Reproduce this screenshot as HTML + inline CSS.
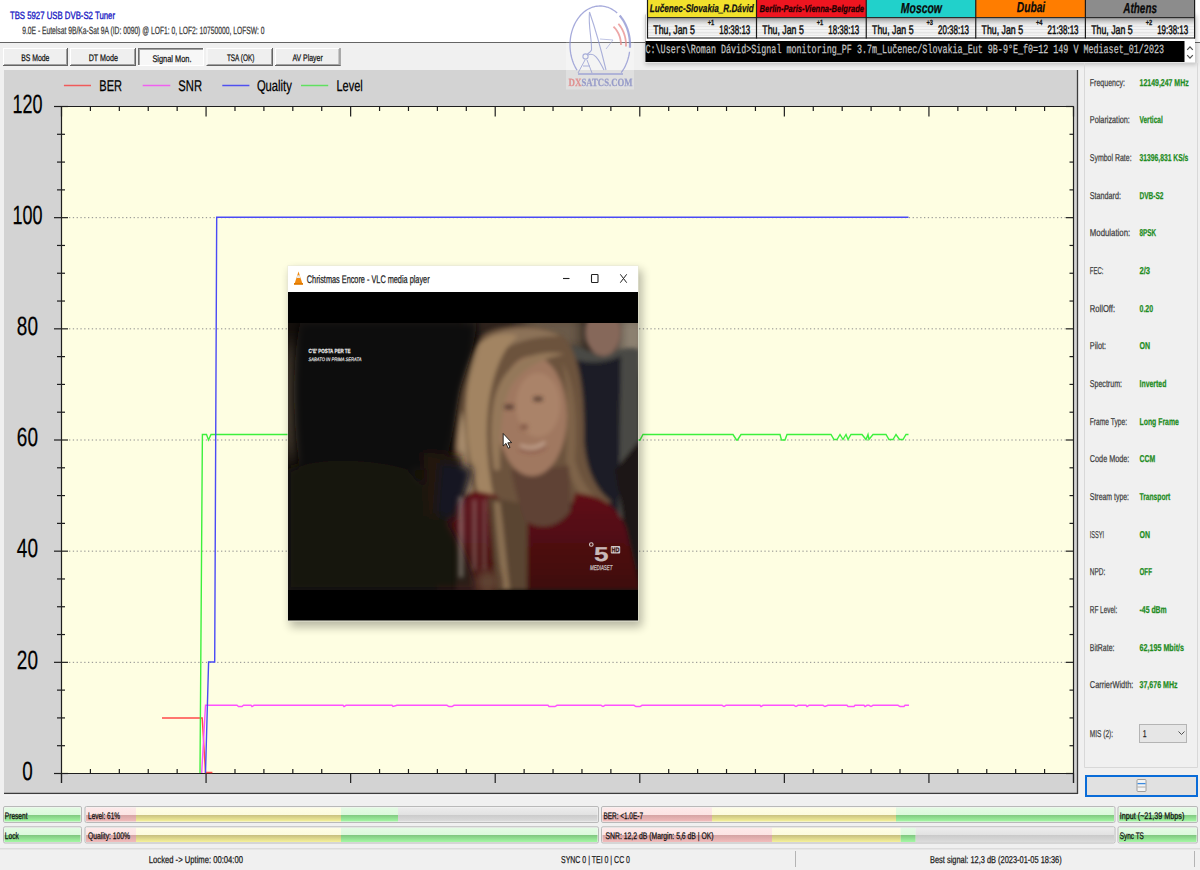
<!DOCTYPE html><html><head><meta charset="utf-8"><style>html,body{margin:0;padding:0;background:#f0f0f0;width:1200px;height:870px;overflow:hidden}svg{display:block}</style></head><body>
<svg width="1200" height="870" viewBox="0 0 1200 870" text-rendering="geometricPrecision">
<defs>
<linearGradient id="gGreen" x1="0" y1="0" x2="0" y2="1">
 <stop offset="0" stop-color="#e4fbe4"/><stop offset="0.52" stop-color="#dcf9dc"/><stop offset="0.53" stop-color="#80c880"/><stop offset="1" stop-color="#a4f8a4"/></linearGradient>
<linearGradient id="gPink" x1="0" y1="0" x2="0" y2="1">
 <stop offset="0" stop-color="#fdeaea"/><stop offset="0.52" stop-color="#fce4e4"/><stop offset="0.53" stop-color="#d4a4a4"/><stop offset="1" stop-color="#f2bcbc"/></linearGradient>
<linearGradient id="gYellow" x1="0" y1="0" x2="0" y2="1">
 <stop offset="0" stop-color="#fefde6"/><stop offset="0.52" stop-color="#fcfbde"/><stop offset="0.53" stop-color="#c8c080"/><stop offset="1" stop-color="#f6f29a"/></linearGradient>
<linearGradient id="gGray" x1="0" y1="0" x2="0" y2="1">
 <stop offset="0" stop-color="#ececec"/><stop offset="0.52" stop-color="#e2e2e2"/><stop offset="0.53" stop-color="#cacaca"/><stop offset="1" stop-color="#dcdcdc"/></linearGradient>
<linearGradient id="gTime" x1="0" y1="0" x2="0" y2="1">
 <stop offset="0" stop-color="#9a9a9a"/><stop offset="0.2" stop-color="#d0d0d0"/><stop offset="0.35" stop-color="#ececec"/><stop offset="0.6" stop-color="#f6f6f6"/><stop offset="0.8" stop-color="#ececec"/><stop offset="0.9" stop-color="#fafafa"/><stop offset="1" stop-color="#ffffff"/></linearGradient>
<filter id="shadow" x="-20%" y="-20%" width="140%" height="140%"><feGaussianBlur stdDeviation="5"/></filter>
<filter id="blur2" x="-30%" y="-30%" width="160%" height="160%"><feGaussianBlur stdDeviation="2"/></filter>
<filter id="blur4" x="-30%" y="-30%" width="160%" height="160%"><feGaussianBlur stdDeviation="4"/></filter>
<filter id="blur8" x="-30%" y="-30%" width="160%" height="160%"><feGaussianBlur stdDeviation="8"/></filter>
<linearGradient id="gDress" x1="0" y1="0" x2="0" y2="1"><stop offset="0" stop-color="#621218"/><stop offset="1" stop-color="#3e080c"/></linearGradient>
<clipPath id="vidclip"><rect x="288" y="323" width="350" height="267"/></clipPath>
</defs>
<rect x="0" y="0" width="1200" height="870" fill="#f0f0f0" />
<rect x="0" y="0" width="1200" height="42" fill="#ffffff" />
<line x1="0" y1="42.5" x2="1200" y2="42.5" stroke="#646464" stroke-width="1" />
<text x="9.90" y="18.70" font-family="'Liberation Sans', sans-serif" font-size="10.5" font-weight="normal" font-style="normal" fill="#2020c4" textLength="105.10" lengthAdjust="spacingAndGlyphs"  stroke="#2020c4" stroke-width="0.35">TBS 5927 USB DVB-S2 Tuner</text>
<text x="22.20" y="33.80" font-family="'Liberation Sans', sans-serif" font-size="10.5" font-weight="normal" font-style="normal" fill="#3c3c3c" textLength="242.30" lengthAdjust="spacingAndGlyphs"  stroke="#3c3c3c" stroke-width="0.25">9.0E - Eutelsat 9B/Ka-Sat 9A (ID: 0090) @ LOF1: 0, LOF2: 10750000, LOFSW: 0</text>
<rect x="3" y="48" width="65" height="18" fill="#efefef" />
<line x1="3.5" y1="48" x2="3.5" y2="66" stroke="#ffffff" stroke-width="1" />
<line x1="3" y1="48.5" x2="68" y2="48.5" stroke="#ffffff" stroke-width="1" />
<line x1="67.5" y1="48" x2="67.5" y2="66" stroke="#646464" stroke-width="1" />
<line x1="3" y1="65.5" x2="68" y2="65.5" stroke="#646464" stroke-width="1" />
<line x1="66.5" y1="49" x2="66.5" y2="65" stroke="#a0a0a0" stroke-width="1" />
<line x1="4" y1="64.5" x2="67" y2="64.5" stroke="#a0a0a0" stroke-width="1" />
<text x="21.20" y="60.80" font-family="'Liberation Sans', sans-serif" font-size="9.5" font-weight="normal" font-style="normal" fill="#111" textLength="28.20" lengthAdjust="spacingAndGlyphs"  stroke="#111" stroke-width="0.25">BS Mode</text>
<rect x="70" y="48" width="66" height="18" fill="#efefef" />
<line x1="70.5" y1="48" x2="70.5" y2="66" stroke="#ffffff" stroke-width="1" />
<line x1="70" y1="48.5" x2="136" y2="48.5" stroke="#ffffff" stroke-width="1" />
<line x1="135.5" y1="48" x2="135.5" y2="66" stroke="#646464" stroke-width="1" />
<line x1="70" y1="65.5" x2="136" y2="65.5" stroke="#646464" stroke-width="1" />
<line x1="134.5" y1="49" x2="134.5" y2="65" stroke="#a0a0a0" stroke-width="1" />
<line x1="71" y1="64.5" x2="135" y2="64.5" stroke="#a0a0a0" stroke-width="1" />
<text x="88.70" y="60.80" font-family="'Liberation Sans', sans-serif" font-size="9.5" font-weight="normal" font-style="normal" fill="#111" textLength="29.20" lengthAdjust="spacingAndGlyphs"  stroke="#111" stroke-width="0.25">DT Mode</text>
<rect x="138" y="48" width="66" height="18" fill="#f7f7f7" />
<line x1="138.5" y1="48" x2="138.5" y2="66" stroke="#6e6e6e" stroke-width="1" />
<line x1="138" y1="48.5" x2="204" y2="48.5" stroke="#6e6e6e" stroke-width="1" />
<line x1="139.5" y1="49" x2="139.5" y2="65" stroke="#a0a0a0" stroke-width="1" />
<line x1="139" y1="49.5" x2="203" y2="49.5" stroke="#a0a0a0" stroke-width="1" />
<line x1="203.5" y1="48" x2="203.5" y2="66" stroke="#ffffff" stroke-width="1" />
<line x1="138" y1="65.5" x2="204" y2="65.5" stroke="#ffffff" stroke-width="1" />
<text x="152.40" y="61.60" font-family="'Liberation Sans', sans-serif" font-size="9.5" font-weight="normal" font-style="normal" fill="#111" textLength="39.10" lengthAdjust="spacingAndGlyphs"  stroke="#111" stroke-width="0.25">Signal Mon.</text>
<rect x="206.5" y="48" width="66.5" height="18" fill="#efefef" />
<line x1="207.0" y1="48" x2="207.0" y2="66" stroke="#ffffff" stroke-width="1" />
<line x1="206.5" y1="48.5" x2="273" y2="48.5" stroke="#ffffff" stroke-width="1" />
<line x1="272.5" y1="48" x2="272.5" y2="66" stroke="#646464" stroke-width="1" />
<line x1="206.5" y1="65.5" x2="273" y2="65.5" stroke="#646464" stroke-width="1" />
<line x1="271.5" y1="49" x2="271.5" y2="65" stroke="#a0a0a0" stroke-width="1" />
<line x1="207.5" y1="64.5" x2="272" y2="64.5" stroke="#a0a0a0" stroke-width="1" />
<text x="226.90" y="60.80" font-family="'Liberation Sans', sans-serif" font-size="9.5" font-weight="normal" font-style="normal" fill="#111" textLength="27.50" lengthAdjust="spacingAndGlyphs"  stroke="#111" stroke-width="0.25">TSA (OK)</text>
<rect x="275" y="48" width="65.5" height="18" fill="#efefef" />
<line x1="275.5" y1="48" x2="275.5" y2="66" stroke="#ffffff" stroke-width="1" />
<line x1="275" y1="48.5" x2="340.5" y2="48.5" stroke="#ffffff" stroke-width="1" />
<line x1="340.0" y1="48" x2="340.0" y2="66" stroke="#646464" stroke-width="1" />
<line x1="275" y1="65.5" x2="340.5" y2="65.5" stroke="#646464" stroke-width="1" />
<line x1="339.0" y1="49" x2="339.0" y2="65" stroke="#a0a0a0" stroke-width="1" />
<line x1="276" y1="64.5" x2="339.5" y2="64.5" stroke="#a0a0a0" stroke-width="1" />
<text x="292.40" y="60.80" font-family="'Liberation Sans', sans-serif" font-size="9.5" font-weight="normal" font-style="normal" fill="#111" textLength="30.30" lengthAdjust="spacingAndGlyphs"  stroke="#111" stroke-width="0.25">AV Player</text>
<rect x="4" y="70" width="1074" height="723.5" fill="#d3d3d3" />
<line x1="1077.5" y1="70" x2="1077.5" y2="794" stroke="#3c3c3c" stroke-width="1.3" />
<line x1="4" y1="793.5" x2="1078" y2="793.5" stroke="#3c3c3c" stroke-width="1.3" />
<line x1="4" y1="794.8" x2="1079" y2="794.8" stroke="#ffffff" stroke-width="1" />
<rect x="61.5" y="106.5" width="1012.0" height="667.0" fill="#fefee2" />
<line x1="69" y1="662.3333333333334" x2="1066" y2="662.3333333333334" stroke="#8c8c8c" stroke-width="1" stroke-dasharray="1.3 2.5"/>
<line x1="69" y1="551.1666666666666" x2="1066" y2="551.1666666666666" stroke="#8c8c8c" stroke-width="1" stroke-dasharray="1.3 2.5"/>
<line x1="69" y1="440.0" x2="1066" y2="440.0" stroke="#8c8c8c" stroke-width="1" stroke-dasharray="1.3 2.5"/>
<line x1="69" y1="328.8333333333333" x2="1066" y2="328.8333333333333" stroke="#8c8c8c" stroke-width="1" stroke-dasharray="1.3 2.5"/>
<line x1="69" y1="217.66666666666663" x2="1066" y2="217.66666666666663" stroke="#8c8c8c" stroke-width="1" stroke-dasharray="1.3 2.5"/>
<line x1="61.5" y1="106.5" x2="61.5" y2="783" stroke="#1e1e1e" stroke-width="1.2" />
<line x1="1073.5" y1="106.5" x2="1073.5" y2="783" stroke="#1e1e1e" stroke-width="1.2" />
<line x1="54" y1="106.5" x2="1073.5" y2="106.5" stroke="#1e1e1e" stroke-width="1.2" />
<line x1="54" y1="773.5" x2="1073.5" y2="773.5" stroke="#1e1e1e" stroke-width="1.2" />
<line x1="61.5" y1="773.5" x2="61.5" y2="783" stroke="#1e1e1e" stroke-width="1.2" />
<line x1="61.5" y1="106.5" x2="61.5" y2="116.5" stroke="#1e1e1e" stroke-width="1.2" />
<line x1="90.41428571428571" y1="769.0" x2="90.41428571428571" y2="773.5" stroke="#1e1e1e" stroke-width="1.2" />
<line x1="90.41428571428571" y1="106.5" x2="90.41428571428571" y2="111.0" stroke="#1e1e1e" stroke-width="1.2" />
<line x1="119.32857142857142" y1="769.0" x2="119.32857142857142" y2="773.5" stroke="#1e1e1e" stroke-width="1.2" />
<line x1="119.32857142857142" y1="106.5" x2="119.32857142857142" y2="111.0" stroke="#1e1e1e" stroke-width="1.2" />
<line x1="148.24285714285713" y1="769.0" x2="148.24285714285713" y2="773.5" stroke="#1e1e1e" stroke-width="1.2" />
<line x1="148.24285714285713" y1="106.5" x2="148.24285714285713" y2="111.0" stroke="#1e1e1e" stroke-width="1.2" />
<line x1="177.15714285714284" y1="769.0" x2="177.15714285714284" y2="773.5" stroke="#1e1e1e" stroke-width="1.2" />
<line x1="177.15714285714284" y1="106.5" x2="177.15714285714284" y2="111.0" stroke="#1e1e1e" stroke-width="1.2" />
<line x1="206.07142857142858" y1="773.5" x2="206.07142857142858" y2="783" stroke="#1e1e1e" stroke-width="1.2" />
<line x1="206.07142857142858" y1="106.5" x2="206.07142857142858" y2="116.5" stroke="#1e1e1e" stroke-width="1.2" />
<line x1="234.9857142857143" y1="769.0" x2="234.9857142857143" y2="773.5" stroke="#1e1e1e" stroke-width="1.2" />
<line x1="234.9857142857143" y1="106.5" x2="234.9857142857143" y2="111.0" stroke="#1e1e1e" stroke-width="1.2" />
<line x1="263.9" y1="769.0" x2="263.9" y2="773.5" stroke="#1e1e1e" stroke-width="1.2" />
<line x1="263.9" y1="106.5" x2="263.9" y2="111.0" stroke="#1e1e1e" stroke-width="1.2" />
<line x1="292.8142857142857" y1="769.0" x2="292.8142857142857" y2="773.5" stroke="#1e1e1e" stroke-width="1.2" />
<line x1="292.8142857142857" y1="106.5" x2="292.8142857142857" y2="111.0" stroke="#1e1e1e" stroke-width="1.2" />
<line x1="321.72857142857146" y1="769.0" x2="321.72857142857146" y2="773.5" stroke="#1e1e1e" stroke-width="1.2" />
<line x1="321.72857142857146" y1="106.5" x2="321.72857142857146" y2="111.0" stroke="#1e1e1e" stroke-width="1.2" />
<line x1="350.64285714285717" y1="773.5" x2="350.64285714285717" y2="783" stroke="#1e1e1e" stroke-width="1.2" />
<line x1="350.64285714285717" y1="106.5" x2="350.64285714285717" y2="116.5" stroke="#1e1e1e" stroke-width="1.2" />
<line x1="379.5571428571429" y1="769.0" x2="379.5571428571429" y2="773.5" stroke="#1e1e1e" stroke-width="1.2" />
<line x1="379.5571428571429" y1="106.5" x2="379.5571428571429" y2="111.0" stroke="#1e1e1e" stroke-width="1.2" />
<line x1="408.4714285714286" y1="769.0" x2="408.4714285714286" y2="773.5" stroke="#1e1e1e" stroke-width="1.2" />
<line x1="408.4714285714286" y1="106.5" x2="408.4714285714286" y2="111.0" stroke="#1e1e1e" stroke-width="1.2" />
<line x1="437.3857142857143" y1="769.0" x2="437.3857142857143" y2="773.5" stroke="#1e1e1e" stroke-width="1.2" />
<line x1="437.3857142857143" y1="106.5" x2="437.3857142857143" y2="111.0" stroke="#1e1e1e" stroke-width="1.2" />
<line x1="466.3" y1="769.0" x2="466.3" y2="773.5" stroke="#1e1e1e" stroke-width="1.2" />
<line x1="466.3" y1="106.5" x2="466.3" y2="111.0" stroke="#1e1e1e" stroke-width="1.2" />
<line x1="495.2142857142857" y1="773.5" x2="495.2142857142857" y2="783" stroke="#1e1e1e" stroke-width="1.2" />
<line x1="495.2142857142857" y1="106.5" x2="495.2142857142857" y2="116.5" stroke="#1e1e1e" stroke-width="1.2" />
<line x1="524.1285714285714" y1="769.0" x2="524.1285714285714" y2="773.5" stroke="#1e1e1e" stroke-width="1.2" />
<line x1="524.1285714285714" y1="106.5" x2="524.1285714285714" y2="111.0" stroke="#1e1e1e" stroke-width="1.2" />
<line x1="553.0428571428572" y1="769.0" x2="553.0428571428572" y2="773.5" stroke="#1e1e1e" stroke-width="1.2" />
<line x1="553.0428571428572" y1="106.5" x2="553.0428571428572" y2="111.0" stroke="#1e1e1e" stroke-width="1.2" />
<line x1="581.9571428571429" y1="769.0" x2="581.9571428571429" y2="773.5" stroke="#1e1e1e" stroke-width="1.2" />
<line x1="581.9571428571429" y1="106.5" x2="581.9571428571429" y2="111.0" stroke="#1e1e1e" stroke-width="1.2" />
<line x1="610.8714285714286" y1="769.0" x2="610.8714285714286" y2="773.5" stroke="#1e1e1e" stroke-width="1.2" />
<line x1="610.8714285714286" y1="106.5" x2="610.8714285714286" y2="111.0" stroke="#1e1e1e" stroke-width="1.2" />
<line x1="639.7857142857143" y1="773.5" x2="639.7857142857143" y2="783" stroke="#1e1e1e" stroke-width="1.2" />
<line x1="639.7857142857143" y1="106.5" x2="639.7857142857143" y2="116.5" stroke="#1e1e1e" stroke-width="1.2" />
<line x1="668.7" y1="769.0" x2="668.7" y2="773.5" stroke="#1e1e1e" stroke-width="1.2" />
<line x1="668.7" y1="106.5" x2="668.7" y2="111.0" stroke="#1e1e1e" stroke-width="1.2" />
<line x1="697.6142857142858" y1="769.0" x2="697.6142857142858" y2="773.5" stroke="#1e1e1e" stroke-width="1.2" />
<line x1="697.6142857142858" y1="106.5" x2="697.6142857142858" y2="111.0" stroke="#1e1e1e" stroke-width="1.2" />
<line x1="726.5285714285715" y1="769.0" x2="726.5285714285715" y2="773.5" stroke="#1e1e1e" stroke-width="1.2" />
<line x1="726.5285714285715" y1="106.5" x2="726.5285714285715" y2="111.0" stroke="#1e1e1e" stroke-width="1.2" />
<line x1="755.4428571428572" y1="769.0" x2="755.4428571428572" y2="773.5" stroke="#1e1e1e" stroke-width="1.2" />
<line x1="755.4428571428572" y1="106.5" x2="755.4428571428572" y2="111.0" stroke="#1e1e1e" stroke-width="1.2" />
<line x1="784.3571428571429" y1="773.5" x2="784.3571428571429" y2="783" stroke="#1e1e1e" stroke-width="1.2" />
<line x1="784.3571428571429" y1="106.5" x2="784.3571428571429" y2="116.5" stroke="#1e1e1e" stroke-width="1.2" />
<line x1="813.2714285714286" y1="769.0" x2="813.2714285714286" y2="773.5" stroke="#1e1e1e" stroke-width="1.2" />
<line x1="813.2714285714286" y1="106.5" x2="813.2714285714286" y2="111.0" stroke="#1e1e1e" stroke-width="1.2" />
<line x1="842.1857142857143" y1="769.0" x2="842.1857142857143" y2="773.5" stroke="#1e1e1e" stroke-width="1.2" />
<line x1="842.1857142857143" y1="106.5" x2="842.1857142857143" y2="111.0" stroke="#1e1e1e" stroke-width="1.2" />
<line x1="871.1" y1="769.0" x2="871.1" y2="773.5" stroke="#1e1e1e" stroke-width="1.2" />
<line x1="871.1" y1="106.5" x2="871.1" y2="111.0" stroke="#1e1e1e" stroke-width="1.2" />
<line x1="900.0142857142857" y1="769.0" x2="900.0142857142857" y2="773.5" stroke="#1e1e1e" stroke-width="1.2" />
<line x1="900.0142857142857" y1="106.5" x2="900.0142857142857" y2="111.0" stroke="#1e1e1e" stroke-width="1.2" />
<line x1="928.9285714285714" y1="773.5" x2="928.9285714285714" y2="783" stroke="#1e1e1e" stroke-width="1.2" />
<line x1="928.9285714285714" y1="106.5" x2="928.9285714285714" y2="116.5" stroke="#1e1e1e" stroke-width="1.2" />
<line x1="957.8428571428572" y1="769.0" x2="957.8428571428572" y2="773.5" stroke="#1e1e1e" stroke-width="1.2" />
<line x1="957.8428571428572" y1="106.5" x2="957.8428571428572" y2="111.0" stroke="#1e1e1e" stroke-width="1.2" />
<line x1="986.7571428571429" y1="769.0" x2="986.7571428571429" y2="773.5" stroke="#1e1e1e" stroke-width="1.2" />
<line x1="986.7571428571429" y1="106.5" x2="986.7571428571429" y2="111.0" stroke="#1e1e1e" stroke-width="1.2" />
<line x1="1015.6714285714286" y1="769.0" x2="1015.6714285714286" y2="773.5" stroke="#1e1e1e" stroke-width="1.2" />
<line x1="1015.6714285714286" y1="106.5" x2="1015.6714285714286" y2="111.0" stroke="#1e1e1e" stroke-width="1.2" />
<line x1="1044.5857142857144" y1="769.0" x2="1044.5857142857144" y2="773.5" stroke="#1e1e1e" stroke-width="1.2" />
<line x1="1044.5857142857144" y1="106.5" x2="1044.5857142857144" y2="111.0" stroke="#1e1e1e" stroke-width="1.2" />
<line x1="1073.5" y1="773.5" x2="1073.5" y2="783" stroke="#1e1e1e" stroke-width="1.2" />
<line x1="1073.5" y1="106.5" x2="1073.5" y2="116.5" stroke="#1e1e1e" stroke-width="1.2" />
<line x1="54" y1="773.5" x2="68" y2="773.5" stroke="#1e1e1e" stroke-width="1.2" />
<line x1="1066" y1="773.5" x2="1073.5" y2="773.5" stroke="#1e1e1e" stroke-width="1.2" />
<line x1="57" y1="745.7083333333334" x2="65" y2="745.7083333333334" stroke="#1e1e1e" stroke-width="1.2" />
<line x1="1069.5" y1="745.7083333333334" x2="1073.5" y2="745.7083333333334" stroke="#1e1e1e" stroke-width="1.2" />
<line x1="57" y1="717.9166666666666" x2="65" y2="717.9166666666666" stroke="#1e1e1e" stroke-width="1.2" />
<line x1="1069.5" y1="717.9166666666666" x2="1073.5" y2="717.9166666666666" stroke="#1e1e1e" stroke-width="1.2" />
<line x1="57" y1="690.125" x2="65" y2="690.125" stroke="#1e1e1e" stroke-width="1.2" />
<line x1="1069.5" y1="690.125" x2="1073.5" y2="690.125" stroke="#1e1e1e" stroke-width="1.2" />
<line x1="54" y1="662.3333333333334" x2="68" y2="662.3333333333334" stroke="#1e1e1e" stroke-width="1.2" />
<line x1="1066" y1="662.3333333333334" x2="1073.5" y2="662.3333333333334" stroke="#1e1e1e" stroke-width="1.2" />
<line x1="57" y1="634.5416666666666" x2="65" y2="634.5416666666666" stroke="#1e1e1e" stroke-width="1.2" />
<line x1="1069.5" y1="634.5416666666666" x2="1073.5" y2="634.5416666666666" stroke="#1e1e1e" stroke-width="1.2" />
<line x1="57" y1="606.75" x2="65" y2="606.75" stroke="#1e1e1e" stroke-width="1.2" />
<line x1="1069.5" y1="606.75" x2="1073.5" y2="606.75" stroke="#1e1e1e" stroke-width="1.2" />
<line x1="57" y1="578.9583333333334" x2="65" y2="578.9583333333334" stroke="#1e1e1e" stroke-width="1.2" />
<line x1="1069.5" y1="578.9583333333334" x2="1073.5" y2="578.9583333333334" stroke="#1e1e1e" stroke-width="1.2" />
<line x1="54" y1="551.1666666666666" x2="68" y2="551.1666666666666" stroke="#1e1e1e" stroke-width="1.2" />
<line x1="1066" y1="551.1666666666666" x2="1073.5" y2="551.1666666666666" stroke="#1e1e1e" stroke-width="1.2" />
<line x1="57" y1="523.375" x2="65" y2="523.375" stroke="#1e1e1e" stroke-width="1.2" />
<line x1="1069.5" y1="523.375" x2="1073.5" y2="523.375" stroke="#1e1e1e" stroke-width="1.2" />
<line x1="57" y1="495.5833333333333" x2="65" y2="495.5833333333333" stroke="#1e1e1e" stroke-width="1.2" />
<line x1="1069.5" y1="495.5833333333333" x2="1073.5" y2="495.5833333333333" stroke="#1e1e1e" stroke-width="1.2" />
<line x1="57" y1="467.7916666666667" x2="65" y2="467.7916666666667" stroke="#1e1e1e" stroke-width="1.2" />
<line x1="1069.5" y1="467.7916666666667" x2="1073.5" y2="467.7916666666667" stroke="#1e1e1e" stroke-width="1.2" />
<line x1="54" y1="440.0" x2="68" y2="440.0" stroke="#1e1e1e" stroke-width="1.2" />
<line x1="1066" y1="440.0" x2="1073.5" y2="440.0" stroke="#1e1e1e" stroke-width="1.2" />
<line x1="57" y1="412.2083333333333" x2="65" y2="412.2083333333333" stroke="#1e1e1e" stroke-width="1.2" />
<line x1="1069.5" y1="412.2083333333333" x2="1073.5" y2="412.2083333333333" stroke="#1e1e1e" stroke-width="1.2" />
<line x1="57" y1="384.4166666666667" x2="65" y2="384.4166666666667" stroke="#1e1e1e" stroke-width="1.2" />
<line x1="1069.5" y1="384.4166666666667" x2="1073.5" y2="384.4166666666667" stroke="#1e1e1e" stroke-width="1.2" />
<line x1="57" y1="356.625" x2="65" y2="356.625" stroke="#1e1e1e" stroke-width="1.2" />
<line x1="1069.5" y1="356.625" x2="1073.5" y2="356.625" stroke="#1e1e1e" stroke-width="1.2" />
<line x1="54" y1="328.8333333333333" x2="68" y2="328.8333333333333" stroke="#1e1e1e" stroke-width="1.2" />
<line x1="1066" y1="328.8333333333333" x2="1073.5" y2="328.8333333333333" stroke="#1e1e1e" stroke-width="1.2" />
<line x1="57" y1="301.0416666666667" x2="65" y2="301.0416666666667" stroke="#1e1e1e" stroke-width="1.2" />
<line x1="1069.5" y1="301.0416666666667" x2="1073.5" y2="301.0416666666667" stroke="#1e1e1e" stroke-width="1.2" />
<line x1="57" y1="273.25" x2="65" y2="273.25" stroke="#1e1e1e" stroke-width="1.2" />
<line x1="1069.5" y1="273.25" x2="1073.5" y2="273.25" stroke="#1e1e1e" stroke-width="1.2" />
<line x1="57" y1="245.45833333333337" x2="65" y2="245.45833333333337" stroke="#1e1e1e" stroke-width="1.2" />
<line x1="1069.5" y1="245.45833333333337" x2="1073.5" y2="245.45833333333337" stroke="#1e1e1e" stroke-width="1.2" />
<line x1="54" y1="217.66666666666663" x2="68" y2="217.66666666666663" stroke="#1e1e1e" stroke-width="1.2" />
<line x1="1066" y1="217.66666666666663" x2="1073.5" y2="217.66666666666663" stroke="#1e1e1e" stroke-width="1.2" />
<line x1="57" y1="189.875" x2="65" y2="189.875" stroke="#1e1e1e" stroke-width="1.2" />
<line x1="1069.5" y1="189.875" x2="1073.5" y2="189.875" stroke="#1e1e1e" stroke-width="1.2" />
<line x1="57" y1="162.08333333333337" x2="65" y2="162.08333333333337" stroke="#1e1e1e" stroke-width="1.2" />
<line x1="1069.5" y1="162.08333333333337" x2="1073.5" y2="162.08333333333337" stroke="#1e1e1e" stroke-width="1.2" />
<line x1="57" y1="134.29166666666663" x2="65" y2="134.29166666666663" stroke="#1e1e1e" stroke-width="1.2" />
<line x1="1069.5" y1="134.29166666666663" x2="1073.5" y2="134.29166666666663" stroke="#1e1e1e" stroke-width="1.2" />
<line x1="54" y1="106.5" x2="68" y2="106.5" stroke="#1e1e1e" stroke-width="1.2" />
<line x1="1066" y1="106.5" x2="1073.5" y2="106.5" stroke="#1e1e1e" stroke-width="1.2" />
<text x="12.40" y="112.80" font-family="'Liberation Sans', sans-serif" font-size="26.3" font-weight="normal" font-style="normal" fill="#000" textLength="30.00" lengthAdjust="spacingAndGlyphs"  stroke="#000" stroke-width="0.25">120</text>
<text x="12.40" y="223.97" font-family="'Liberation Sans', sans-serif" font-size="26.3" font-weight="normal" font-style="normal" fill="#000" textLength="30.00" lengthAdjust="spacingAndGlyphs"  stroke="#000" stroke-width="0.25">100</text>
<text x="16.85" y="335.13" font-family="'Liberation Sans', sans-serif" font-size="26.3" font-weight="normal" font-style="normal" fill="#000" textLength="21.10" lengthAdjust="spacingAndGlyphs"  stroke="#000" stroke-width="0.25">80</text>
<text x="16.85" y="446.30" font-family="'Liberation Sans', sans-serif" font-size="26.3" font-weight="normal" font-style="normal" fill="#000" textLength="21.10" lengthAdjust="spacingAndGlyphs"  stroke="#000" stroke-width="0.25">60</text>
<text x="16.85" y="557.47" font-family="'Liberation Sans', sans-serif" font-size="26.3" font-weight="normal" font-style="normal" fill="#000" textLength="21.10" lengthAdjust="spacingAndGlyphs"  stroke="#000" stroke-width="0.25">40</text>
<text x="16.85" y="668.63" font-family="'Liberation Sans', sans-serif" font-size="26.3" font-weight="normal" font-style="normal" fill="#000" textLength="21.10" lengthAdjust="spacingAndGlyphs"  stroke="#000" stroke-width="0.25">20</text>
<text x="22.15" y="779.80" font-family="'Liberation Sans', sans-serif" font-size="26.3" font-weight="normal" font-style="normal" fill="#000" textLength="10.50" lengthAdjust="spacingAndGlyphs"  stroke="#000" stroke-width="0.25">0</text>
<line x1="63.9" y1="85.5" x2="91" y2="85.5" stroke="#f05a5a" stroke-width="1.5" />
<text x="99.30" y="91.40" font-family="'Liberation Sans', sans-serif" font-size="15.5" font-weight="normal" font-style="normal" fill="#000" textLength="22.70" lengthAdjust="spacingAndGlyphs"  stroke="#000" stroke-width="0.25">BER</text>
<line x1="142.7" y1="85.5" x2="170.3" y2="85.5" stroke="#f060f0" stroke-width="1.5" />
<text x="178.30" y="91.40" font-family="'Liberation Sans', sans-serif" font-size="15.5" font-weight="normal" font-style="normal" fill="#000" textLength="23.70" lengthAdjust="spacingAndGlyphs"  stroke="#000" stroke-width="0.25">SNR</text>
<line x1="222.3" y1="85.5" x2="249.4" y2="85.5" stroke="#5050f0" stroke-width="1.5" />
<text x="256.90" y="91.40" font-family="'Liberation Sans', sans-serif" font-size="15.5" font-weight="normal" font-style="normal" fill="#000" textLength="34.90" lengthAdjust="spacingAndGlyphs"  stroke="#000" stroke-width="0.25">Quality</text>
<line x1="301" y1="85.5" x2="328.2" y2="85.5" stroke="#60e060" stroke-width="1.5" />
<text x="336.50" y="91.40" font-family="'Liberation Sans', sans-serif" font-size="15.5" font-weight="normal" font-style="normal" fill="#000" textLength="26.30" lengthAdjust="spacingAndGlyphs"  stroke="#000" stroke-width="0.25">Level</text>
<polyline points="162.0,718.0 202.2,718.0 205.5,772.5 212.4,772.5" fill="none" stroke="#ff4a4a" stroke-width="1.4"/>
<polyline points="200.0,773.0 202.4,434.5 206.5,434.5 208.5,440.0 211.0,434.5 628.0,434.5 632.0,440.0 640.0,440.0 643.0,434.5 733.0,434.5 736.5,440.0 737.5,440.0 741.0,434.5 780.0,434.5 781.5,440.0 785.0,440.0 787.0,434.5 831.0,434.5 834.0,439.5 837.0,439.5 840.0,434.5 843.0,439.5 846.0,434.5 848.0,439.5 851.0,434.5 862.0,434.5 866.0,439.5 868.0,434.5 869.0,439.5 873.0,434.5 886.0,434.5 889.0,439.5 893.0,439.5 896.0,434.5 899.5,439.5 903.0,439.5 906.0,434.5 908.5,434.5" fill="none" stroke="#3cf03c" stroke-width="1.4"/>
<polyline points="201.7,773.0 205.5,705.3 237.0,705.3 238.5,706.5 242.0,706.5 243.5,705.3 251.0,705.3 252.0,706.5 254.0,705.3 343.0,705.3 344.0,706.5 346.0,705.3 392.0,705.3 393.0,706.5 397.0,705.3 447.0,705.3 449.0,706.5 452.0,706.5 454.0,705.3 548.0,705.3 549.0,706.5 555.0,706.5 557.0,705.3 601.0,705.3 603.0,706.5 605.0,705.3 634.0,705.3 636.0,706.5 640.0,706.5 642.0,705.3 722.0,705.3 724.0,706.5 726.0,705.3 760.0,705.3 761.0,706.5 763.0,705.3 794.0,705.3 796.0,706.5 798.0,705.3 806.0,705.3 807.0,706.5 809.0,705.3 823.0,705.3 825.0,706.5 828.0,705.3 847.0,705.3 848.0,706.5 854.0,706.5 855.0,705.3 864.0,705.3 865.0,706.5 867.0,705.3 869.0,705.3 871.0,706.5 873.0,705.3 898.0,705.3 900.0,706.5 904.0,706.5 905.0,705.3 909.0,705.3" fill="none" stroke="#ff50ff" stroke-width="1.4"/>
<polyline points="205.5,773.0 208.6,662.0 214.7,662.0 216.7,217.2 908.5,217.2" fill="none" stroke="#4a4af5" stroke-width="1.4"/>
<rect x="290" y="270" width="352" height="357" fill="#000" opacity="0.28" filter="url(#shadow)"/>
<rect x="287.5" y="265.5" width="351" height="356" fill="#e8e8d8" />
<rect x="288" y="266" width="350" height="26" fill="#ffffff" />
<rect x="288" y="292" width="350" height="328.5" fill="#000000" />
<path d="M298.5,271.5 L302.2,283 L294.8,283 Z" fill="#f08a10"/>
<path d="M297.4,275.2 L299.6,275.2 L300.4,278 L296.6,278 Z" fill="#e8e8e8"/>
<rect x="294" y="283" width="9" height="1.8" fill="#e07a00" />
<text x="306.80" y="283.10" font-family="'Liberation Sans', sans-serif" font-size="11" font-weight="normal" font-style="normal" fill="#1a1a1a" textLength="122.80" lengthAdjust="spacingAndGlyphs"  stroke="#1a1a1a" stroke-width="0.25">Christmas Encore - VLC media player</text>
<line x1="563" y1="278.5" x2="569.5" y2="278.5" stroke="#222" stroke-width="1.1" />
<rect x="591.5" y="274.5" width="6.5" height="8" fill="none" stroke="#222" stroke-width="1.1" rx="0.8"/>
<line x1="620.3" y1="274.3" x2="626.7" y2="282.7" stroke="#222" stroke-width="1.0" />
<line x1="626.7" y1="274.3" x2="620.3" y2="282.7" stroke="#222" stroke-width="1.0" />
<g clip-path="url(#vidclip)">
<rect x="288" y="323" width="350" height="267" fill="#130e0b" />
<g filter="url(#blur8)">
<ellipse cx="292" cy="400" rx="10" ry="60" fill="#4e4236"/>
<rect x="525" y="312" width="60" height="42" fill="#6a5a48"/>
<rect x="615" y="312" width="35" height="60" fill="#8e8272"/>
<rect x="470" y="312" width="55" height="30" fill="#2e241a"/>
<rect x="600" y="440" width="45" height="120" fill="#241a12"/>
</g>
<g filter="url(#blur2)">
<path d="M556,352 C570,340 585,348 600,356 C615,350 630,345 640,350 L640,470 L625,520 L600,510 L585,500 C575,470 560,400 556,352 Z" fill="#4a4844"/>
<path d="M571,358 C585,364 605,364 621,356 L618,540 C605,545 590,540 585,520 C578,470 573,410 571,358 Z" fill="#1a1c26"/>
<ellipse cx="603" cy="332" rx="18" ry="24" fill="#86685a"/>
<path d="M615,470 L640,440 L640,590 L630,560 Z" fill="#1e1712"/>
<path d="M482,335 C500,322 545,322 565,338 C580,355 585,395 584,440 C586,470 596,490 612,502 L590,510 L560,500 L530,520 L525,590 L478,590 C470,560 460,520 455,480 C450,440 455,390 468,360 C472,350 476,342 482,335 Z" fill="#6c533c"/>
<path d="M486,338 C505,326 540,325 560,336 C540,336 515,340 500,352 Z" fill="#8c7258"/>
<path d="M478,345 C488,335 505,332 518,336 C502,348 492,375 488,410 C485,440 488,470 494,500 L482,505 C472,475 465,440 466,405 C467,380 470,360 478,345 Z" fill="#a28462"/>
<path d="M462,410 C468,440 466,470 478,510 L470,515 C458,480 454,440 462,410 Z" fill="#a68a6a"/>
<path d="M562,362 C575,380 578,420 575,460 C580,480 590,495 605,505 L592,508 C578,495 570,480 566,460 C568,420 568,385 562,362 Z" fill="#7e644a"/>
<path d="M437,590 L438,540 C442,515 452,497 475,491 L495,495 L525,520 C540,530 558,528 570,512 L575,493 C595,495 615,500 626,528 L640,590 Z" fill="url(#gDress)"/>
<path d="M488,497 L528,505 L527,590 L496,590 C493,560 490,520 488,497 Z" fill="#5a4430"/>
<path d="M500,502 C504,530 506,560 510,590 L503,590 C499,560 496,530 494,502 Z" fill="#8a7052"/>
<path d="M511,470 L569,466 C570,490 572,505 570,512 C555,530 538,530 524,520 C518,500 514,485 511,470 Z" fill="#5e4234"/>
<ellipse cx="532" cy="416" rx="35" ry="60" fill="#a07860"/>
<ellipse cx="538" cy="405" rx="22" ry="32" fill="#b08a70" opacity="0.6"/>
<path d="M494,400 C502,365 530,348 565,354 C545,358 525,366 512,385 C503,400 500,430 500,470 L494,470 C490,445 490,420 494,400 Z" fill="#94785a"/>
</g>
<g filter="url(#blur4)">
<path d="M300,323 L477,323 C474,350 466,370 460,390 C455,420 452,440 448,452 L420,470 L300,470 C292,420 292,360 300,323 Z" fill="#0e0a08"/>
<path d="M288,470 C320,455 380,460 410,470 L435,500 C455,530 470,560 478,590 L288,590 Z" fill="#161210"/>
<path d="M423,452 L462,456 L458,520 L426,516 Z" fill="#24160f"/>
<path d="M440,462 L472,468 C470,485 462,505 450,520 L436,512 Z" fill="#141620"/>
</g>
<g filter="url(#blur2)" opacity="0.5"><rect x="456" y="496" width="33" height="96" fill="#6a3a3a" opacity="0.5"/><rect x="459" y="497" width="4" height="80" fill="#c0b0a8"/><rect x="473" y="500" width="3" height="70" fill="#a89890"/><rect x="483" y="500" width="3" height="70" fill="#908078"/></g>
<ellipse cx="488" cy="582" rx="12" ry="12" fill="#5e4232" filter="url(#blur4)"/>
<g filter="url(#blur2)" opacity="0.75"><ellipse cx="509" cy="407" rx="5" ry="2.2" fill="#3a2820"/><ellipse cx="538" cy="399" rx="5" ry="2.2" fill="#3a2820"/><ellipse cx="524" cy="427" rx="4" ry="3" fill="#7a5040"/><path d="M520,445 C528,449 538,448 545,442" stroke="#d8c0b0" stroke-width="2.4" fill="none"/><path d="M519,449 C528,454 540,453 546,446" stroke="#7a3a38" stroke-width="1.5" fill="none"/></g>
</g>
<text x="308.60" y="352.90" font-family="'Liberation Sans', sans-serif" font-size="6" font-weight="bold" font-style="normal" fill="#e8e8e8" textLength="42.00" lengthAdjust="spacingAndGlyphs"  stroke="#e8e8e8" stroke-width="0.25">C&#x27;E&#x27; POSTA PER TE</text>
<text x="308.60" y="360.50" font-family="'Liberation Sans', sans-serif" font-size="5" font-weight="normal" font-style="italic" fill="#d8d8d8" textLength="52.80" lengthAdjust="spacingAndGlyphs"  stroke="#d8d8d8" stroke-width="0.25">SABATO IN PRIMA SERATA</text>
<text x="594.00" y="561.00" font-family="'Liberation Sans', sans-serif" font-size="20" font-weight="bold" font-style="normal" fill="#c8b8b8" textLength="14.50" lengthAdjust="spacingAndGlyphs"  stroke="#c8b8b8" stroke-width="0.25">5</text>
<circle cx="591.3" cy="544.5" r="1.8" fill="none" stroke="#d0c8c8" stroke-width="1.1"/>
<rect x="610.8" y="546" width="9.4" height="7.5" rx="1" fill="#d0c8c8"/>
<text x="611.60" y="552.40" font-family="'Liberation Sans', sans-serif" font-size="6.5" font-weight="bold" font-style="normal" fill="#3a1010" textLength="7.80" lengthAdjust="spacingAndGlyphs"  stroke="#3a1010" stroke-width="0.25">HD</text>
<text x="590.00" y="570.00" font-family="'Liberation Sans', sans-serif" font-size="7" font-weight="normal" font-style="italic" fill="#d0c8c8" textLength="22.40" lengthAdjust="spacingAndGlyphs"  stroke="#d0c8c8" stroke-width="0.25">MEDIASET</text>
<path d="M503.2,433.5 L503.2,446 L506,443.4 L508.2,448.2 L510,447.4 L507.8,442.8 L511.6,442.6 Z" fill="#fff" stroke="#000" stroke-width="0.8"/>
<rect x="566" y="42.5" width="68" height="47" fill="#ffffff" opacity="0.28"/>
<g opacity="0.75">
<polyline points="577.02,70.07 576.12,68.61 575.28,67.09 574.49,65.52 573.76,63.91 573.09,62.25 572.49,60.55 571.95,58.82 571.47,57.05 571.06,55.26 570.71,53.44 570.43,51.60 570.22,49.75 570.08,47.89 570.01,46.02 570.01,44.15 570.07,42.28 570.21,40.42 570.41,38.56 570.68,36.73 571.02,34.91 571.43,33.11 571.90,31.34 572.44,29.60 573.04,27.90 573.70,26.24 574.42,24.62 575.20,23.05 576.04,21.53 576.93,20.06 577.88,18.65 578.88,17.30 579.93,16.02 581.02,14.80 582.16,13.65 583.33,12.57 584.55,11.57 585.80,10.65 587.08,9.80 588.40,9.03 589.74,8.35 591.10,7.75 592.49,7.24 593.89,6.82 595.31,6.48 596.73,6.23 598.17,6.07 599.61,6.00 601.05,6.02 602.48,6.13 603.92,6.33 605.34,6.62 606.75,7.00 608.14,7.46 609.52,8.02 610.87,8.65 612.20,9.37 613.50,10.17 614.77,11.06 616.01,12.02 617.21,13.05" fill="none" stroke="#8a90d0" stroke-width="1.3"/>
<polyline points="619.68,15.57 620.71,16.78 621.69,18.06 622.62,19.39 623.51,20.78 624.35,22.21 625.13,23.70 625.86,25.24 626.54,26.81 627.16,28.43 627.72,30.08 628.22,31.76 628.66,33.47 629.04,35.20 629.36,36.96 629.61,38.73 629.80,40.52 629.93,42.31 629.99,44.12 629.99,45.92 629.93,47.72" fill="none" stroke="#8a90d0" stroke-width="2.2"/>
<polyline points="629.54,51.77 629.37,52.94 629.17,54.10 628.94,55.26 628.69,56.40 628.41,57.54 628.10,58.66 627.77,59.77 627.41,60.86 627.02,61.94 626.61,63.01 626.17,64.06 625.72,65.09 625.23,66.10 624.72,67.09 624.19,68.06 623.64,69.01 623.07,69.94 622.47,70.84 621.85,71.72 621.21,72.58" fill="none" stroke="#8a90d0" stroke-width="1.3"/>
<line x1="578" y1="74" x2="623" y2="74" stroke="#8a90d0" stroke-width="1.6" />
<polyline points="618.38,23.79 619.14,24.69 619.86,25.64 620.54,26.61 621.19,27.62 621.81,28.66 622.38,29.73 622.91,30.82 623.41,31.94 623.86,33.09 624.27,34.25 624.64,35.43 624.97,36.63 625.25,37.84 625.49,39.07 625.68,40.31 625.83,41.55 625.93,42.80 625.99,44.06 626.00,45.31 625.96,46.57" fill="none" stroke="#e88a8a" stroke-width="1.8"/>
<polyline points="613.50,26.61 614.19,27.31 614.85,28.03 615.48,28.79 616.09,29.57 616.66,30.39 617.20,31.23 617.71,32.10 618.19,33.00 618.63,33.92 619.03,34.86 619.40,35.82 619.73,36.79 620.03,37.78 620.28,38.79 620.50,39.81 620.68,40.83 620.82,41.87 620.92,42.91 620.98,43.95 621.00,45.00" fill="none" stroke="#e88a8a" stroke-width="1.8"/>
<path d="M589.5,12 C594,25 600,45 606,70" fill="none" stroke="#9098d0" stroke-width="1.1"/>
<path d="M589.5,12 C588,25 592,40 591.5,50 C590,53 588,53 587,55" fill="none" stroke="#9098d0" stroke-width="1.1"/>
<path d="M588,55 C594,52 598,58 604,70" fill="none" stroke="#9098d0" stroke-width="1.1"/>
<circle cx="585.5" cy="56.5" r="2.6" fill="none" stroke="#9098d0" stroke-width="1.1"/>
<path d="M585,60 L578,73 M587,60 L592,73 M583,66 L590,66" fill="none" stroke="#9098d0" stroke-width="1"/>
<path d="M600,39 L613,40 L606,49" fill="none" stroke="#a0a8d8" stroke-width="0.9"/>
</g>
<g opacity="0.7">
<text x="568.50" y="85.70" font-family="'Liberation Serif', serif" font-size="11" font-weight="bold" font-style="normal" fill="#e07070" textLength="13.00" lengthAdjust="spacingAndGlyphs"  stroke="#e07070" stroke-width="0.25">DX</text>
<text x="581.50" y="85.70" font-family="'Liberation Serif', serif" font-size="11" font-weight="bold" font-style="normal" fill="#7a80c0" textLength="51.00" lengthAdjust="spacingAndGlyphs"  stroke="#7a80c0" stroke-width="0.25">SATCS.COM</text>
</g>
<rect x="645" y="15" width="552" height="50" fill="#000" opacity="0.18" filter="url(#blur2)"/>
<rect x="645" y="14.5" width="550" height="48" fill="#ffffff" />
<line x1="645.5" y1="14.5" x2="645.5" y2="62" stroke="#c8c8c8" stroke-width="1" />
<rect x="647.5" y="0" width="109.0" height="17.3" fill="#f2e12c" />
<rect x="647.5" y="18" width="109.0" height="19.5" fill="url(#gTime)"/>
<rect x="756.5" y="0" width="109.75" height="17.3" fill="#ee1520" />
<rect x="756.5" y="18" width="109.75" height="19.5" fill="url(#gTime)"/>
<rect x="866.25" y="0" width="109.5" height="17.3" fill="#21d1cb" />
<rect x="866.25" y="18" width="109.5" height="19.5" fill="url(#gTime)"/>
<rect x="975.75" y="0" width="109.65000000000009" height="17.3" fill="#ff7d00" />
<rect x="975.75" y="18" width="109.65000000000009" height="19.5" fill="url(#gTime)"/>
<rect x="1085.4" y="0" width="109.59999999999991" height="17.3" fill="#8c8c8c" />
<rect x="1085.4" y="18" width="109.59999999999991" height="19.5" fill="url(#gTime)"/>
<line x1="647.5" y1="26.5" x2="1195" y2="26.5" stroke="#e4e4e4" stroke-width="1" />
<line x1="647.5" y1="29.5" x2="1195" y2="29.5" stroke="#e4e4e4" stroke-width="1" />
<line x1="647.5" y1="32.5" x2="1195" y2="32.5" stroke="#e4e4e4" stroke-width="1" />
<line x1="647.5" y1="35.5" x2="1195" y2="35.5" stroke="#e4e4e4" stroke-width="1" />
<line x1="647.5" y1="17.6" x2="1195" y2="17.6" stroke="#1a1a1a" stroke-width="1" />
<line x1="647.5" y1="38" x2="1195" y2="38" stroke="#5a5a5a" stroke-width="1.3" />
<line x1="647.5" y1="0" x2="647.5" y2="38.5" stroke="#1a1a1a" stroke-width="1.2" />
<line x1="756.5" y1="0" x2="756.5" y2="38.5" stroke="#1a1a1a" stroke-width="1.2" />
<line x1="866.25" y1="0" x2="866.25" y2="38.5" stroke="#1a1a1a" stroke-width="1.2" />
<line x1="975.75" y1="0" x2="975.75" y2="38.5" stroke="#1a1a1a" stroke-width="1.2" />
<line x1="1085.4" y1="0" x2="1085.4" y2="38.5" stroke="#1a1a1a" stroke-width="1.2" />
<line x1="1194.6" y1="0" x2="1194.6" y2="38.5" stroke="#1a1a1a" stroke-width="1.2" />
<text x="649.80" y="12.40" font-family="'Liberation Sans', sans-serif" font-size="11" font-weight="bold" font-style="italic" fill="#111" textLength="103.90" lengthAdjust="spacingAndGlyphs"  stroke="#111" stroke-width="0.25">Lučenec-Slovakia_R.Dávid</text>
<text x="759.50" y="12.20" font-family="'Liberation Sans', sans-serif" font-size="10" font-weight="bold" font-style="italic" fill="#1a0000" textLength="104.50" lengthAdjust="spacingAndGlyphs"  stroke="#1a0000" stroke-width="0.25">Berlin-Paris-Vienna-Belgrade</text>
<text x="900.80" y="13.00" font-family="'Liberation Sans', sans-serif" font-size="14.5" font-weight="bold" font-style="italic" fill="#0a0a0a" textLength="41.20" lengthAdjust="spacingAndGlyphs"  stroke="#0a0a0a" stroke-width="0.25">Moscow</text>
<text x="1016.80" y="12.30" font-family="'Liberation Sans', sans-serif" font-size="14.5" font-weight="bold" font-style="italic" fill="#0a0a0a" textLength="28.40" lengthAdjust="spacingAndGlyphs"  stroke="#0a0a0a" stroke-width="0.25">Dubai</text>
<text x="1123.30" y="12.50" font-family="'Liberation Sans', sans-serif" font-size="14.5" font-weight="bold" font-style="italic" fill="#0a0a0a" textLength="33.70" lengthAdjust="spacingAndGlyphs"  stroke="#0a0a0a" stroke-width="0.25">Athens</text>
<text x="653.30" y="33.80" font-family="'Liberation Sans', sans-serif" font-size="12.5" font-weight="normal" font-style="normal" fill="#111" textLength="41.50" lengthAdjust="spacingAndGlyphs"  stroke="#111" stroke-width="0.5">Thu, Jan 5</text>
<text x="707.80" y="25.40" font-family="'Liberation Sans', sans-serif" font-size="7.5" font-weight="bold" font-style="normal" fill="#111" textLength="6.50" lengthAdjust="spacingAndGlyphs"  stroke="#111" stroke-width="0.25">+1</text>
<text x="719.30" y="33.80" font-family="'Liberation Sans', sans-serif" font-size="12.5" font-weight="normal" font-style="normal" fill="#111" textLength="31.00" lengthAdjust="spacingAndGlyphs"  stroke="#111" stroke-width="0.5">18:38:13</text>
<text x="762.30" y="33.80" font-family="'Liberation Sans', sans-serif" font-size="12.5" font-weight="normal" font-style="normal" fill="#111" textLength="41.50" lengthAdjust="spacingAndGlyphs"  stroke="#111" stroke-width="0.5">Thu, Jan 5</text>
<text x="816.80" y="25.40" font-family="'Liberation Sans', sans-serif" font-size="7.5" font-weight="bold" font-style="normal" fill="#111" textLength="6.50" lengthAdjust="spacingAndGlyphs"  stroke="#111" stroke-width="0.25">+1</text>
<text x="828.30" y="33.80" font-family="'Liberation Sans', sans-serif" font-size="12.5" font-weight="normal" font-style="normal" fill="#111" textLength="31.00" lengthAdjust="spacingAndGlyphs"  stroke="#111" stroke-width="0.5">18:38:13</text>
<text x="872.05" y="33.80" font-family="'Liberation Sans', sans-serif" font-size="12.5" font-weight="normal" font-style="normal" fill="#111" textLength="41.50" lengthAdjust="spacingAndGlyphs"  stroke="#111" stroke-width="0.5">Thu, Jan 5</text>
<text x="926.55" y="25.40" font-family="'Liberation Sans', sans-serif" font-size="7.5" font-weight="bold" font-style="normal" fill="#111" textLength="6.50" lengthAdjust="spacingAndGlyphs"  stroke="#111" stroke-width="0.25">+3</text>
<text x="938.05" y="33.80" font-family="'Liberation Sans', sans-serif" font-size="12.5" font-weight="normal" font-style="normal" fill="#111" textLength="31.00" lengthAdjust="spacingAndGlyphs"  stroke="#111" stroke-width="0.5">20:38:13</text>
<text x="981.55" y="33.80" font-family="'Liberation Sans', sans-serif" font-size="12.5" font-weight="normal" font-style="normal" fill="#111" textLength="41.50" lengthAdjust="spacingAndGlyphs"  stroke="#111" stroke-width="0.5">Thu, Jan 5</text>
<text x="1036.05" y="25.40" font-family="'Liberation Sans', sans-serif" font-size="7.5" font-weight="bold" font-style="normal" fill="#111" textLength="6.50" lengthAdjust="spacingAndGlyphs"  stroke="#111" stroke-width="0.25">+4</text>
<text x="1047.55" y="33.80" font-family="'Liberation Sans', sans-serif" font-size="12.5" font-weight="normal" font-style="normal" fill="#111" textLength="31.00" lengthAdjust="spacingAndGlyphs"  stroke="#111" stroke-width="0.5">21:38:13</text>
<text x="1091.20" y="33.80" font-family="'Liberation Sans', sans-serif" font-size="12.5" font-weight="normal" font-style="normal" fill="#111" textLength="41.50" lengthAdjust="spacingAndGlyphs"  stroke="#111" stroke-width="0.5">Thu, Jan 5</text>
<text x="1145.70" y="25.40" font-family="'Liberation Sans', sans-serif" font-size="7.5" font-weight="bold" font-style="normal" fill="#111" textLength="6.50" lengthAdjust="spacingAndGlyphs"  stroke="#111" stroke-width="0.25">+2</text>
<text x="1157.20" y="33.80" font-family="'Liberation Sans', sans-serif" font-size="12.5" font-weight="normal" font-style="normal" fill="#111" textLength="31.00" lengthAdjust="spacingAndGlyphs"  stroke="#111" stroke-width="0.5">19:38:13</text>
<rect x="645.5" y="41" width="539" height="21" fill="#000000" />
<text x="645.50" y="53.20" font-family="'Liberation Mono', monospace" font-size="12.5" font-weight="normal" font-style="normal" fill="#c4c4c4" textLength="518.50" lengthAdjust="spacingAndGlyphs"  stroke="#c4c4c4" stroke-width="0.25">C:\Users\Roman Dávid&gt;Signal monitoring_PF 3.7m_Lučenec/Slovakia_Eut 9B-9°E_f0=12 149 V Mediaset_01/2023</text>
<path d="M1187.2,49.8 L1190,46.8 L1192.8,49.8" fill="none" stroke="#505050" stroke-width="1.2"/>
<path d="M1187.2,55.2 L1190,58.2 L1192.8,55.2" fill="none" stroke="#505050" stroke-width="1.2"/>
<line x1="1084.5" y1="63" x2="1084.5" y2="767.5" stroke="#d8d8d8" stroke-width="1" />
<line x1="1197.5" y1="63" x2="1197.5" y2="767.5" stroke="#d8d8d8" stroke-width="1" />
<line x1="1084.5" y1="767.5" x2="1197.5" y2="767.5" stroke="#d8d8d8" stroke-width="1" />
<text x="1089.80" y="85.50" font-family="'Liberation Sans', sans-serif" font-size="10" font-weight="normal" font-style="normal" fill="#404040" textLength="35.20" lengthAdjust="spacingAndGlyphs"  stroke="#404040" stroke-width="0.25">Frequency:</text>
<text x="1139.50" y="85.50" font-family="'Liberation Sans', sans-serif" font-size="10" font-weight="bold" font-style="normal" fill="#1e8c1e" textLength="49.20" lengthAdjust="spacingAndGlyphs"  stroke="#1e8c1e" stroke-width="0.25">12149,247 MHz</text>
<text x="1089.80" y="123.18" font-family="'Liberation Sans', sans-serif" font-size="10" font-weight="normal" font-style="normal" fill="#404040" textLength="40.10" lengthAdjust="spacingAndGlyphs"  stroke="#404040" stroke-width="0.25">Polarization:</text>
<text x="1139.50" y="123.18" font-family="'Liberation Sans', sans-serif" font-size="10" font-weight="bold" font-style="normal" fill="#1e8c1e" textLength="23.20" lengthAdjust="spacingAndGlyphs"  stroke="#1e8c1e" stroke-width="0.25">Vertical</text>
<text x="1089.80" y="160.86" font-family="'Liberation Sans', sans-serif" font-size="10" font-weight="normal" font-style="normal" fill="#404040" textLength="41.80" lengthAdjust="spacingAndGlyphs"  stroke="#404040" stroke-width="0.25">Symbol Rate:</text>
<text x="1139.50" y="160.86" font-family="'Liberation Sans', sans-serif" font-size="10" font-weight="bold" font-style="normal" fill="#1e8c1e" textLength="48.80" lengthAdjust="spacingAndGlyphs"  stroke="#1e8c1e" stroke-width="0.25">31396,831 KS/s</text>
<text x="1089.80" y="198.54" font-family="'Liberation Sans', sans-serif" font-size="10" font-weight="normal" font-style="normal" fill="#404040" textLength="31.20" lengthAdjust="spacingAndGlyphs"  stroke="#404040" stroke-width="0.25">Standard:</text>
<text x="1139.50" y="198.54" font-family="'Liberation Sans', sans-serif" font-size="10" font-weight="bold" font-style="normal" fill="#1e8c1e" textLength="24.00" lengthAdjust="spacingAndGlyphs"  stroke="#1e8c1e" stroke-width="0.25">DVB-S2</text>
<text x="1089.80" y="236.22" font-family="'Liberation Sans', sans-serif" font-size="10" font-weight="normal" font-style="normal" fill="#404040" textLength="40.40" lengthAdjust="spacingAndGlyphs"  stroke="#404040" stroke-width="0.25">Modulation:</text>
<text x="1139.50" y="236.22" font-family="'Liberation Sans', sans-serif" font-size="10" font-weight="bold" font-style="normal" fill="#1e8c1e" textLength="16.60" lengthAdjust="spacingAndGlyphs"  stroke="#1e8c1e" stroke-width="0.25">8PSK</text>
<text x="1089.80" y="273.90" font-family="'Liberation Sans', sans-serif" font-size="10" font-weight="normal" font-style="normal" fill="#404040" textLength="13.60" lengthAdjust="spacingAndGlyphs"  stroke="#404040" stroke-width="0.25">FEC:</text>
<text x="1139.50" y="273.90" font-family="'Liberation Sans', sans-serif" font-size="10" font-weight="bold" font-style="normal" fill="#1e8c1e" textLength="10.60" lengthAdjust="spacingAndGlyphs"  stroke="#1e8c1e" stroke-width="0.25">2/3</text>
<text x="1089.80" y="311.58" font-family="'Liberation Sans', sans-serif" font-size="10" font-weight="normal" font-style="normal" fill="#404040" textLength="25.20" lengthAdjust="spacingAndGlyphs"  stroke="#404040" stroke-width="0.25">RollOff:</text>
<text x="1139.50" y="311.58" font-family="'Liberation Sans', sans-serif" font-size="10" font-weight="bold" font-style="normal" fill="#1e8c1e" textLength="13.60" lengthAdjust="spacingAndGlyphs"  stroke="#1e8c1e" stroke-width="0.25">0.20</text>
<text x="1089.80" y="349.26" font-family="'Liberation Sans', sans-serif" font-size="10" font-weight="normal" font-style="normal" fill="#404040" textLength="16.20" lengthAdjust="spacingAndGlyphs"  stroke="#404040" stroke-width="0.25">Pilot:</text>
<text x="1139.50" y="349.26" font-family="'Liberation Sans', sans-serif" font-size="10" font-weight="bold" font-style="normal" fill="#1e8c1e" textLength="10.60" lengthAdjust="spacingAndGlyphs"  stroke="#1e8c1e" stroke-width="0.25">ON</text>
<text x="1089.80" y="386.94" font-family="'Liberation Sans', sans-serif" font-size="10" font-weight="normal" font-style="normal" fill="#404040" textLength="32.20" lengthAdjust="spacingAndGlyphs"  stroke="#404040" stroke-width="0.25">Spectrum:</text>
<text x="1139.50" y="386.94" font-family="'Liberation Sans', sans-serif" font-size="10" font-weight="bold" font-style="normal" fill="#1e8c1e" textLength="26.90" lengthAdjust="spacingAndGlyphs"  stroke="#1e8c1e" stroke-width="0.25">Inverted</text>
<text x="1089.80" y="424.62" font-family="'Liberation Sans', sans-serif" font-size="10" font-weight="normal" font-style="normal" fill="#404040" textLength="37.30" lengthAdjust="spacingAndGlyphs"  stroke="#404040" stroke-width="0.25">Frame Type:</text>
<text x="1139.50" y="424.62" font-family="'Liberation Sans', sans-serif" font-size="10" font-weight="bold" font-style="normal" fill="#1e8c1e" textLength="39.40" lengthAdjust="spacingAndGlyphs"  stroke="#1e8c1e" stroke-width="0.25">Long Frame</text>
<text x="1089.80" y="462.30" font-family="'Liberation Sans', sans-serif" font-size="10" font-weight="normal" font-style="normal" fill="#404040" textLength="39.60" lengthAdjust="spacingAndGlyphs"  stroke="#404040" stroke-width="0.25">Code Mode:</text>
<text x="1139.50" y="462.30" font-family="'Liberation Sans', sans-serif" font-size="10" font-weight="bold" font-style="normal" fill="#1e8c1e" textLength="15.70" lengthAdjust="spacingAndGlyphs"  stroke="#1e8c1e" stroke-width="0.25">CCM</text>
<text x="1089.80" y="499.98" font-family="'Liberation Sans', sans-serif" font-size="10" font-weight="normal" font-style="normal" fill="#404040" textLength="39.20" lengthAdjust="spacingAndGlyphs"  stroke="#404040" stroke-width="0.25">Stream type:</text>
<text x="1139.50" y="499.98" font-family="'Liberation Sans', sans-serif" font-size="10" font-weight="bold" font-style="normal" fill="#1e8c1e" textLength="30.80" lengthAdjust="spacingAndGlyphs"  stroke="#1e8c1e" stroke-width="0.25">Transport</text>
<text x="1089.80" y="537.66" font-family="'Liberation Sans', sans-serif" font-size="10" font-weight="normal" font-style="normal" fill="#404040" textLength="14.30" lengthAdjust="spacingAndGlyphs"  stroke="#404040" stroke-width="0.25">ISSYI</text>
<text x="1139.50" y="537.66" font-family="'Liberation Sans', sans-serif" font-size="10" font-weight="bold" font-style="normal" fill="#1e8c1e" textLength="10.50" lengthAdjust="spacingAndGlyphs"  stroke="#1e8c1e" stroke-width="0.25">ON</text>
<text x="1089.80" y="575.34" font-family="'Liberation Sans', sans-serif" font-size="10" font-weight="normal" font-style="normal" fill="#404040" textLength="15.50" lengthAdjust="spacingAndGlyphs"  stroke="#404040" stroke-width="0.25">NPD:</text>
<text x="1139.50" y="575.34" font-family="'Liberation Sans', sans-serif" font-size="10" font-weight="bold" font-style="normal" fill="#1e8c1e" textLength="12.50" lengthAdjust="spacingAndGlyphs"  stroke="#1e8c1e" stroke-width="0.25">OFF</text>
<text x="1089.80" y="613.02" font-family="'Liberation Sans', sans-serif" font-size="10" font-weight="normal" font-style="normal" fill="#404040" textLength="27.40" lengthAdjust="spacingAndGlyphs"  stroke="#404040" stroke-width="0.25">RF Level:</text>
<text x="1139.50" y="613.02" font-family="'Liberation Sans', sans-serif" font-size="10" font-weight="bold" font-style="normal" fill="#1e8c1e" textLength="27.20" lengthAdjust="spacingAndGlyphs"  stroke="#1e8c1e" stroke-width="0.25">-45 dBm</text>
<text x="1089.80" y="650.70" font-family="'Liberation Sans', sans-serif" font-size="10" font-weight="normal" font-style="normal" fill="#404040" textLength="24.60" lengthAdjust="spacingAndGlyphs"  stroke="#404040" stroke-width="0.25">BitRate:</text>
<text x="1139.50" y="650.70" font-family="'Liberation Sans', sans-serif" font-size="10" font-weight="bold" font-style="normal" fill="#1e8c1e" textLength="44.60" lengthAdjust="spacingAndGlyphs"  stroke="#1e8c1e" stroke-width="0.25">62,195 Mbit/s</text>
<text x="1089.80" y="688.38" font-family="'Liberation Sans', sans-serif" font-size="10" font-weight="normal" font-style="normal" fill="#404040" textLength="43.60" lengthAdjust="spacingAndGlyphs"  stroke="#404040" stroke-width="0.25">CarrierWidth:</text>
<text x="1139.50" y="688.38" font-family="'Liberation Sans', sans-serif" font-size="10" font-weight="bold" font-style="normal" fill="#1e8c1e" textLength="38.00" lengthAdjust="spacingAndGlyphs"  stroke="#1e8c1e" stroke-width="0.25">37,676 MHz</text>
<text x="1089.80" y="737.20" font-family="'Liberation Sans', sans-serif" font-size="10" font-weight="normal" font-style="normal" fill="#404040" textLength="23.20" lengthAdjust="spacingAndGlyphs"  stroke="#404040" stroke-width="0.25">MIS (2):</text>
<rect x="1139.5" y="724.5" width="47" height="18" fill="#e6e6e6" stroke="#b4b4b4" stroke-width="1"/>
<text x="1142.70" y="737.00" font-family="'Liberation Sans', sans-serif" font-size="10" font-weight="normal" font-style="normal" fill="#222" textLength="3.80" lengthAdjust="spacingAndGlyphs"  stroke="#222" stroke-width="0.25">1</text>
<path d="M1178.5,731.5 L1181.5,734.5 L1184.5,731.5" fill="none" stroke="#505050" stroke-width="1"/>
<rect x="1086" y="776" width="111" height="20" fill="#e1e1e1" stroke="#0a6cd8" stroke-width="2"/>
<rect x="1137" y="779.5" width="9" height="12" fill="#f4f4f4" stroke="#8a8a8a" stroke-width="0.8" rx="1"/>
<line x1="1137.5" y1="783.6" x2="1145.5" y2="783.6" stroke="#3a8ae0" stroke-width="1.3" />
<line x1="1137.5" y1="787" x2="1145.5" y2="787" stroke="#9a9a9a" stroke-width="0.8" />
<rect x="3.5" y="806.5" width="78.0" height="16.0" rx="1.5" fill="#f4f4f4" stroke="#b9b9b9" stroke-width="1"/>
<rect x="4.5" y="807.5" width="76.0" height="14.0" fill="url(#gGreen)"/>
<rect x="3.5" y="826.8" width="78.0" height="16.200000000000045" rx="1.5" fill="#f4f4f4" stroke="#b9b9b9" stroke-width="1"/>
<rect x="4.5" y="827.8" width="76.0" height="14.200000000000045" fill="url(#gGreen)"/>
<rect x="85" y="806.5" width="513.5" height="16.0" rx="1.5" fill="#f4f4f4" stroke="#b9b9b9" stroke-width="1"/>
<rect x="86" y="807.5" width="50" height="14.0" fill="url(#gPink)"/>
<rect x="136" y="807.5" width="205" height="14.0" fill="url(#gYellow)"/>
<rect x="341" y="807.5" width="57" height="14.0" fill="url(#gGreen)"/>
<rect x="398" y="807.5" width="199.5" height="14.0" fill="url(#gGray)"/>
<rect x="85" y="826.8" width="513.5" height="16.200000000000045" rx="1.5" fill="#f4f4f4" stroke="#b9b9b9" stroke-width="1"/>
<rect x="86" y="827.8" width="50" height="14.200000000000045" fill="url(#gPink)"/>
<rect x="136" y="827.8" width="205" height="14.200000000000045" fill="url(#gYellow)"/>
<rect x="341" y="827.8" width="256.5" height="14.200000000000045" fill="url(#gGreen)"/>
<rect x="601.5" y="806.5" width="513.5" height="16.0" rx="1.5" fill="#f4f4f4" stroke="#b9b9b9" stroke-width="1"/>
<rect x="602.5" y="807.5" width="109.5" height="14.0" fill="url(#gPink)"/>
<rect x="712" y="807.5" width="184" height="14.0" fill="url(#gYellow)"/>
<rect x="896" y="807.5" width="218" height="14.0" fill="url(#gGreen)"/>
<rect x="601.5" y="826.8" width="513.5" height="16.200000000000045" rx="1.5" fill="#f4f4f4" stroke="#b9b9b9" stroke-width="1"/>
<rect x="602.5" y="827.8" width="169.5" height="14.200000000000045" fill="url(#gPink)"/>
<rect x="772" y="827.8" width="128.70000000000005" height="14.200000000000045" fill="url(#gYellow)"/>
<rect x="900.7" y="827.8" width="15.0" height="14.200000000000045" fill="url(#gGreen)"/>
<rect x="915.7" y="827.8" width="198.29999999999995" height="14.200000000000045" fill="url(#gGray)"/>
<rect x="1118" y="806.5" width="79.5" height="16.0" rx="1.5" fill="#f4f4f4" stroke="#b9b9b9" stroke-width="1"/>
<rect x="1119" y="807.5" width="77.5" height="14.0" fill="url(#gGreen)"/>
<rect x="1118" y="826.8" width="79.5" height="16.200000000000045" rx="1.5" fill="#f4f4f4" stroke="#b9b9b9" stroke-width="1"/>
<rect x="1119" y="827.8" width="77.5" height="14.200000000000045" fill="url(#gGreen)"/>
<text x="4.80" y="818.70" font-family="'Liberation Sans', sans-serif" font-size="9.5" font-weight="normal" font-style="normal" fill="#111" textLength="22.70" lengthAdjust="spacingAndGlyphs"  stroke="#111" stroke-width="0.25">Present</text>
<text x="4.80" y="838.70" font-family="'Liberation Sans', sans-serif" font-size="9.5" font-weight="normal" font-style="normal" fill="#111" textLength="14.00" lengthAdjust="spacingAndGlyphs"  stroke="#111" stroke-width="0.25">Lock</text>
<text x="88.10" y="818.70" font-family="'Liberation Sans', sans-serif" font-size="9.5" font-weight="normal" font-style="normal" fill="#111" textLength="31.90" lengthAdjust="spacingAndGlyphs"  stroke="#111" stroke-width="0.25">Level: 61%</text>
<text x="88.10" y="838.70" font-family="'Liberation Sans', sans-serif" font-size="9.5" font-weight="normal" font-style="normal" fill="#111" textLength="41.90" lengthAdjust="spacingAndGlyphs"  stroke="#111" stroke-width="0.25">Quality: 100%</text>
<text x="603.40" y="818.70" font-family="'Liberation Sans', sans-serif" font-size="9.5" font-weight="normal" font-style="normal" fill="#111" textLength="39.60" lengthAdjust="spacingAndGlyphs"  stroke="#111" stroke-width="0.25">BER: &lt;1.0E-7</text>
<text x="605.50" y="838.70" font-family="'Liberation Sans', sans-serif" font-size="9.5" font-weight="normal" font-style="normal" fill="#111" textLength="108.10" lengthAdjust="spacingAndGlyphs"  stroke="#111" stroke-width="0.25">SNR: 12,2 dB (Margin: 5,6 dB | OK)</text>
<text x="1119.80" y="818.50" font-family="'Liberation Sans', sans-serif" font-size="9.5" font-weight="normal" font-style="normal" fill="#111" textLength="64.50" lengthAdjust="spacingAndGlyphs"  stroke="#111" stroke-width="0.25">Input (~21,39 Mbps)</text>
<text x="1119.80" y="838.50" font-family="'Liberation Sans', sans-serif" font-size="9.5" font-weight="normal" font-style="normal" fill="#111" textLength="24.00" lengthAdjust="spacingAndGlyphs"  stroke="#111" stroke-width="0.25">Sync TS</text>
<line x1="0" y1="848.75" x2="1200" y2="848.75" stroke="#dcdcdc" stroke-width="1.5" />
<text x="148.80" y="862.50" font-family="'Liberation Sans', sans-serif" font-size="10" font-weight="normal" font-style="normal" fill="#1a1a1a" textLength="94.20" lengthAdjust="spacingAndGlyphs"  stroke="#1a1a1a" stroke-width="0.25">Locked -&gt; Uptime: 00:04:00</text>
<text x="561.00" y="862.50" font-family="'Liberation Sans', sans-serif" font-size="10" font-weight="normal" font-style="normal" fill="#1a1a1a" textLength="69.00" lengthAdjust="spacingAndGlyphs"  stroke="#1a1a1a" stroke-width="0.25">SYNC 0 | TEI 0 | CC 0</text>
<text x="930.00" y="862.50" font-family="'Liberation Sans', sans-serif" font-size="10" font-weight="normal" font-style="normal" fill="#1a1a1a" textLength="131.70" lengthAdjust="spacingAndGlyphs"  stroke="#1a1a1a" stroke-width="0.25">Best signal: 12,3 dB (2023-01-05 18:36)</text>
<line x1="795.5" y1="851" x2="795.5" y2="867" stroke="#b4b4b4" stroke-width="1" />
<line x1="1194.5" y1="851" x2="1194.5" y2="867" stroke="#b4b4b4" stroke-width="1" />
</svg></body></html>
